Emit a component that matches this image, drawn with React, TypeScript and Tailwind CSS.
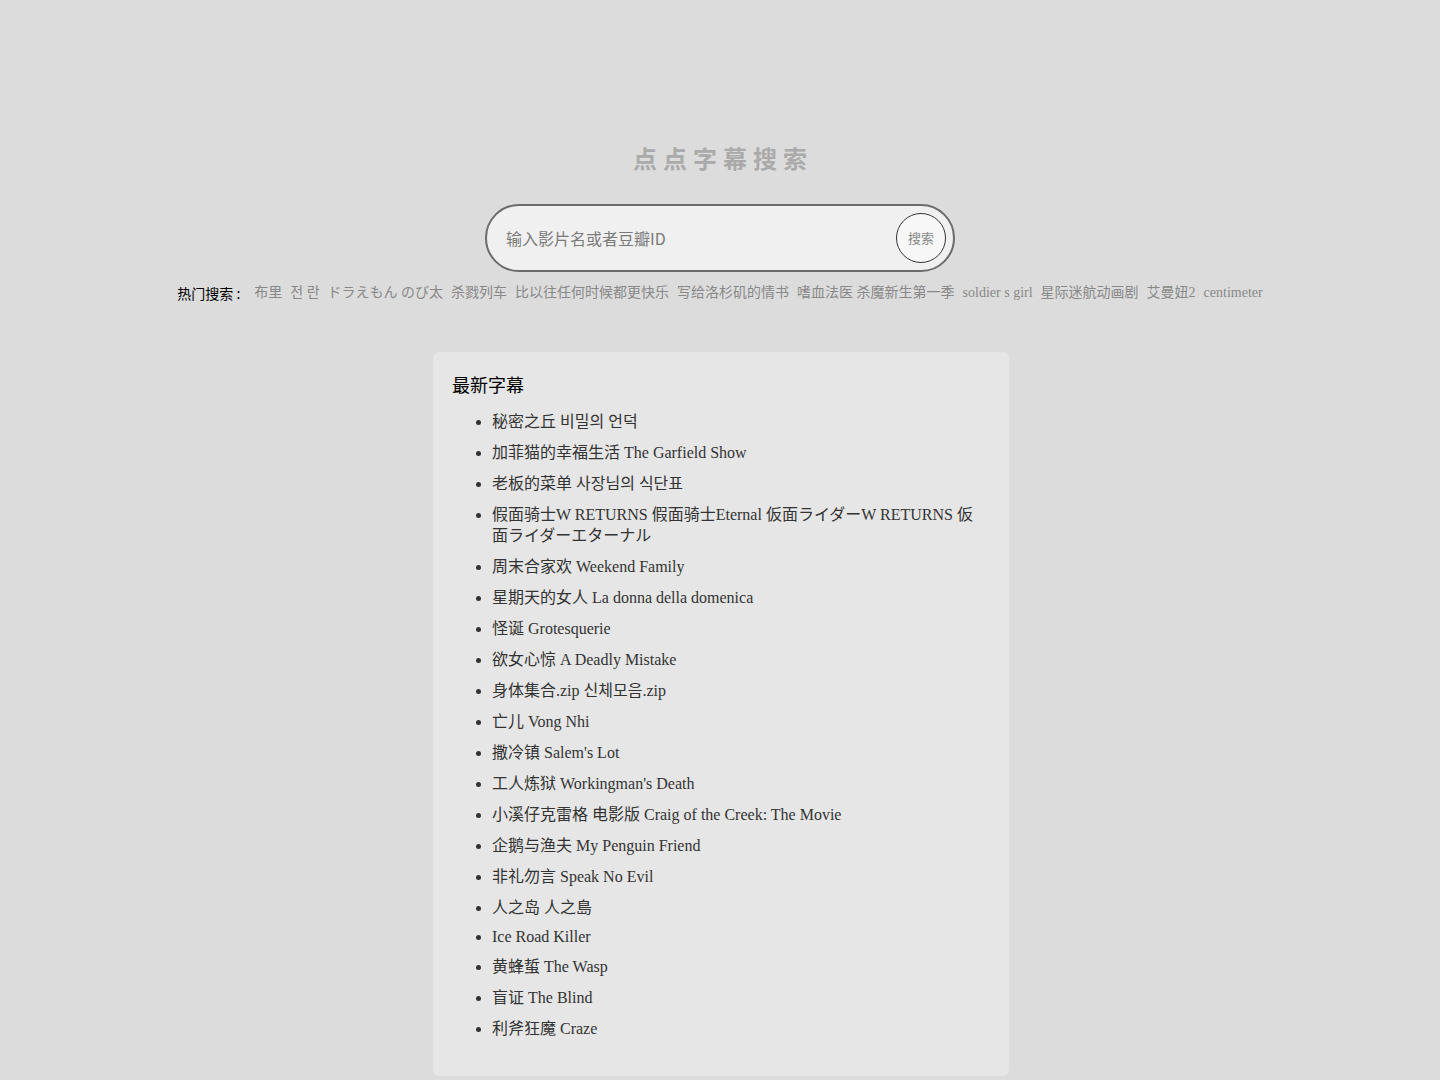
import React from "react"

const hot = [
  "布里",
  "전 란",
  "ドラえもん のび太",
  "杀戮列车",
  "比以往任何时候都更快乐",
  "写给洛杉矶的情书",
  "嗜血法医 杀魔新生第一季",
  "soldier s girl",
  "星际迷航动画剧",
  "艾曼妞2",
  "centimeter",
]

const latest = [
  "秘密之丘 비밀의 언덕",
  "加菲猫的幸福生活 The Garfield Show",
  "老板的菜单 사장님의 식단표",
  "假面骑士W RETURNS 假面骑士Eternal 仮面ライダーW RETURNS 仮面ライダーエターナル",
  "周末合家欢 Weekend Family",
  "星期天的女人 La donna della domenica",
  "怪诞 Grotesquerie",
  "欲女心惊 A Deadly Mistake",
  "身体集合.zip 신체모음.zip",
  "亡儿 Vong Nhi",
  "撒冷镇 Salem's Lot",
  "工人炼狱 Workingman's Death",
  "小溪仔克雷格 电影版 Craig of the Creek: The Movie",
  "企鹅与渔夫 My Penguin Friend",
  "非礼勿言 Speak No Evil",
  "人之岛 人之島",
  "Ice Road Killer",
  "黄蜂蜇 The Wasp",
  "盲证 The Blind",
  "利斧狂魔 Craze",
]

// latin-only titles render a bit shorter in the original
const latinOnly = (t: string) => /^[\x00-\x7f]+$/.test(t)

export default function App() {
  return (
    <div className="min-h-screen bg-[#dcdcdc] pt-[144px] pb-2 font-['Liberation_Serif','Noto_Sans_CJK_SC',serif]">
      <h1 className="pl-[6px] text-center text-[24px] leading-[28px] font-bold tracking-[6px] text-[#aaaaaa] font-['Noto_Sans_CJK_SC',sans-serif]">
        点点字幕搜索
      </h1>

      <div className="mx-auto mt-[32px] flex h-[68px] w-[470px] items-center rounded-full border-2 border-[#6b6b6b] bg-[#f0f0f0] pl-[19px] pr-[7px]">
        <input
          placeholder="输入影片名或者豆瓣ID"
          className="flex-1 bg-transparent text-[16px] text-[#333] outline-none placeholder:text-[#7a7a7a] font-['Noto_Sans_CJK_SC',sans-serif]"
        />
        <button className="grid h-[50px] w-[50px] place-items-center rounded-full border border-[#333] bg-[#f7f7f7] text-[13px] text-[#888] font-['Noto_Sans_CJK_SC',sans-serif]">
          搜索
        </button>
      </div>

      <div className="mt-[11px] flex justify-center gap-x-2 text-[14px] leading-[20px]">
        <span className="pr-[6px] text-black font-['Noto_Sans_CJK_SC',sans-serif]">热门搜索 :</span>
        {hot.map((h) => (
          <a key={h} href="#" className="text-[#888]">
            {h}
          </a>
        ))}
      </div>

      <div className="mx-auto mt-[49px] w-[576px] translate-x-[1px] rounded-md bg-[#e6e6e6] pl-[19px] pr-[22px] pt-[20px] pb-[27px]">
        <h2 className="text-[18px] leading-[24px] text-black font-['Noto_Sans_CJK_SC',sans-serif]">最新字幕</h2>
        <ul className="mt-[15px] list-disc pl-[40px] text-[16px] text-[#333]">
          {latest.map((t) => (
            <li key={t} className={latinOnly(t) ? "mb-[10px] leading-[18px]" : "mb-[10px] leading-[21px]"}>
              <a href="#">{t}</a>
            </li>
          ))}
        </ul>
      </div>
    </div>
  )
}
